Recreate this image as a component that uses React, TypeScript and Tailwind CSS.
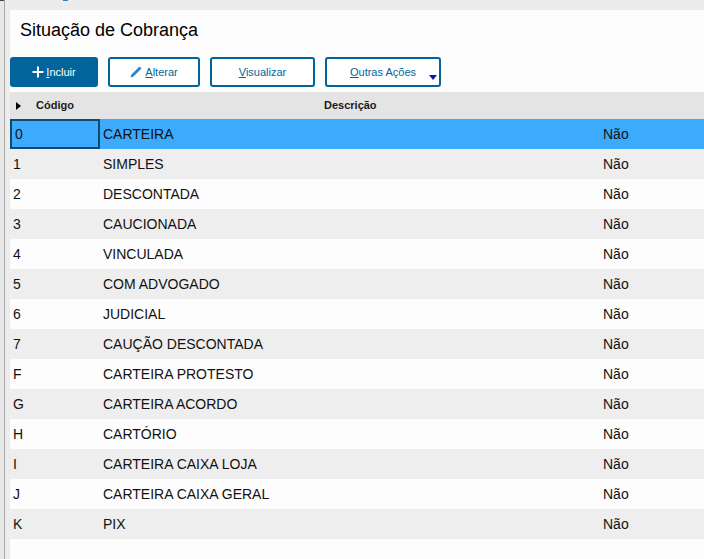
import React from 'react';

const rows = [
  ['0', 'CARTEIRA'],
  ['1', 'SIMPLES'],
  ['2', 'DESCONTADA'],
  ['3', 'CAUCIONADA'],
  ['4', 'VINCULADA'],
  ['5', 'COM ADVOGADO'],
  ['6', 'JUDICIAL'],
  ['7', 'CAUÇÃO DESCONTADA'],
  ['F', 'CARTEIRA PROTESTO'],
  ['G', 'CARTEIRA ACORDO'],
  ['H', 'CARTÓRIO'],
  ['I', 'CARTEIRA CAIXA LOJA'],
  ['J', 'CARTEIRA CAIXA GERAL'],
  ['K', 'PIX'],
];

const btn =
  'h-[30px] flex items-center justify-center rounded-[3px] border-2 border-[#01659b] text-[11px]';

const App: React.FC = () => {
  return (
    <div className="w-[704px] h-[559px] overflow-hidden flex bg-[#ececec] font-['Liberation_Sans',sans-serif]">
      <div className="w-[10px] shrink-0 flex">
        <div className="w-[4px] bg-[#e8e8e8] border-t border-[#444444]" />
        <div className="w-px bg-[#a8a8a8]" />
      </div>
      <div className="flex-1 min-w-0 flex flex-col">
        <div className="h-[10px] shrink-0 pl-[53px]">
          <div className="w-[5px] h-px bg-[#2a86c8]" />
        </div>
        <div className="flex-1 min-h-0 bg-[#fdfdfd]">
          <h1 className="h-[47px] pl-[10px] pt-[9px] text-[18px] leading-[22px] text-black">Situação de Cobrança</h1>
          <div className="h-[35px] flex">
            <button className={`${btn} w-[88px] bg-[#01659b] text-white gap-[2px]`}>
              <svg width="12" height="12" viewBox="0 0 12 12" fill="none" stroke="white" strokeWidth="2">
                <path d="M6 .5v11M.5 6h11" />
              </svg>
              <span><u>I</u>ncluir</span>
            </button>
            <button className={`${btn} w-[92px] ml-[10px] bg-white text-[#01659b] gap-[3px]`}>
              <svg width="12" height="12" viewBox="0 0 12 12" fill="#2a86c8">
                <path d="M9.5 0.5l2 2L3.5 10.5l-3 1 1-3z" />
              </svg>
              <span><u>A</u>lterar</span>
            </button>
            <button className={`${btn} w-[105px] ml-[10px] bg-white text-[#01659b]`}>
              <span><u>V</u>isualizar</span>
            </button>
            <button className={`${btn} w-[116px] ml-[10px] bg-white text-[#01659b] relative`}>
              <span><u>O</u>utras Ações</span>
              <svg className="absolute right-[2px] bottom-[5px]" width="8" height="5" viewBox="0 0 8 5" fill="#0a1aa0">
                <path d="M0 0h8L4 5z" />
              </svg>
            </button>
          </div>
          <div className="h-[27px] flex items-center bg-[#e4e4e4] text-[11px] font-bold text-[#1a1a1a]">
            <svg className="ml-[6px]" width="5" height="8" viewBox="0 0 5 8" fill="black">
              <path d="M0 0l5 4-5 4z" />
            </svg>
            <span className="w-[288px] ml-[15px]">Código</span>
            <span>Descrição</span>
          </div>
          {rows.map(([code, name], i) => (
            <div
              key={code}
              className={`h-[30px] flex items-center text-[14px] text-[#111] ${
                i === 0 ? 'bg-[#3dabfc]' : i % 2 === 0 ? 'bg-[#fdfdfd]' : 'bg-[#eeeeee]'
              }`}
            >
              <div
                className={`w-[90px] h-full flex items-center ${
                  i === 0 ? 'border-2 border-[#0c4a70] pl-[3px]' : 'pl-[3px]'
                }`}
              >
                {code}
              </div>
              <div className="w-[503px] pl-[3px]">{name}</div>
              <div>Não</div>
            </div>
          ))}
        </div>
      </div>
    </div>
  );
};

export default App;
